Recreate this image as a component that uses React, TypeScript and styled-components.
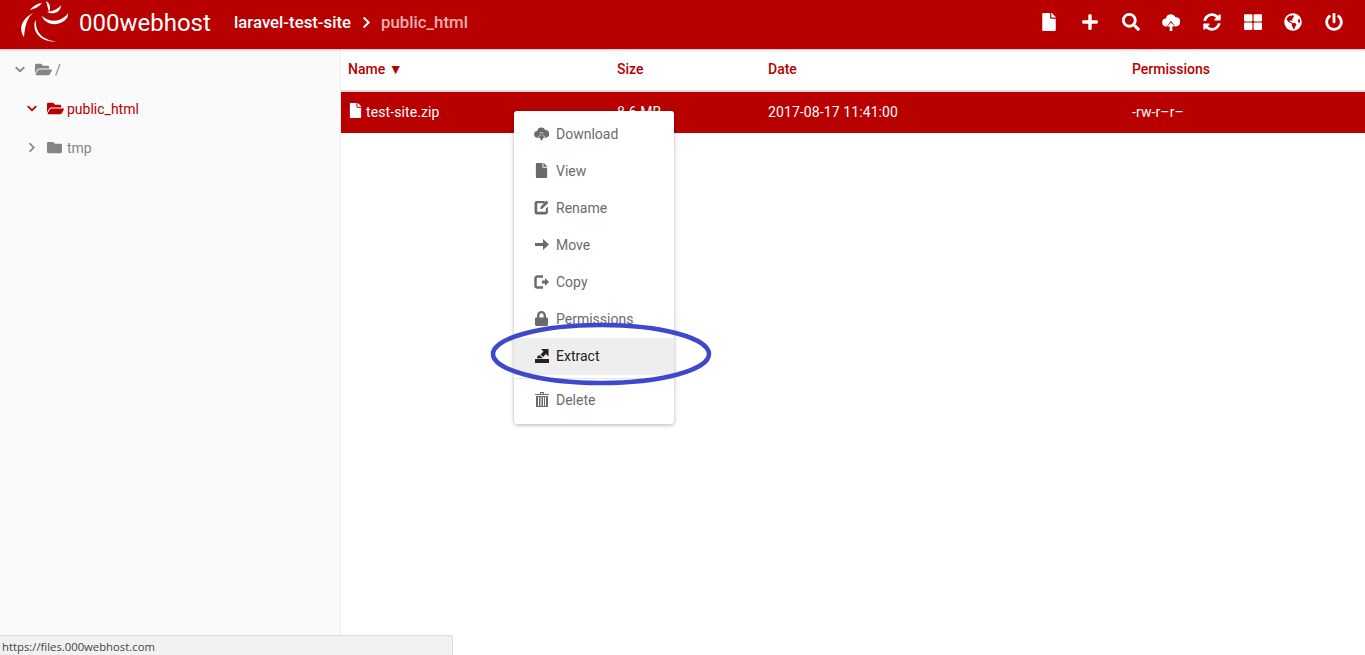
import React from 'react';
import styled, { createGlobalStyle } from 'styled-components';
import {
  FaChevronDown,
  FaChevronRight,
  FaFile,
  FaFolder,
  FaFolderOpen,
  FaGlobeAmericas,
  FaLock,
  FaPlus,
  FaPowerOff,
  FaSearch,
  FaSyncAlt,
  FaThLarge,
} from 'react-icons/fa';

const RED = '#b80000';

const GlobalStyle = createGlobalStyle`
  html, body, #root {
    height: 100%;
    margin: 0;
  }
  body {
    font-family: Roboto, "Liberation Sans", sans-serif;
    font-size: 14px;
    overflow: hidden;
    background: #fff;
  }
`;

const Page = styled.div`
  position: relative;
  display: flex;
  flex-direction: column;
  height: 655px;
`;

const TopBar = styled.header`
  display: flex;
  align-items: center;
  box-sizing: border-box;
  height: 49px;
  padding: 0 0 5px 19px;
  background: ${RED};
  color: #fff;
  box-shadow: 0 1px 2px rgba(0, 0, 0, 0.25);
  flex: none;
  position: relative;
  z-index: 1;
`;

const Brand = styled.div`
  display: flex;
  align-items: center;
  gap: 10px;
  width: 215px;
  font-size: 24px;
  flex: none;
`;

const BrandName = styled.span`
  margin-top: 2px;
`;

const Crumbs = styled.div`
  display: flex;
  align-items: center;
  font-size: 16.8px;
  font-weight: 500;
`;

const CrumbCurrent = styled.span`
  color: rgba(255, 255, 255, 0.7);
`;

const CrumbArrow = styled.span`
  display: flex;
  width: 13px;
  margin: 0 8.5px;
  font-size: 13px;
`;

const Tools = styled.nav`
  display: flex;
  align-items: center;
  margin-left: auto;
  padding-right: 22px;
  gap: 22.7px;
`;

const Tool = styled.span`
  display: flex;
  justify-content: center;
  width: 18px;
  font-size: 18px;
`;

const Body = styled.div`
  display: flex;
  flex: 1;
  min-height: 0;
`;

const Tree = styled.aside`
  width: 340px;
  flex: none;
  padding-top: 1px;
  background: #fafafa;
  border-right: 1px solid #efefef;
`;

const TreeRow = styled.div<{ $indent: number; $active?: boolean }>`
  display: flex;
  align-items: center;
  height: 39px;
  padding-left: ${({ $indent }) => $indent}px;
  color: ${({ $active }) => ($active ? RED : '#858585')};
`;

const TreeCaret = styled.span`
  display: flex;
  justify-content: center;
  width: 10px;
  margin-right: 10px;
  font-size: 11px;
`;

const TreeFolder = styled.span<{ $size?: number }>`
  display: flex;
  width: 17px;
  margin-right: 3px;
  font-size: ${({ $size }) => $size ?? 17}px;
`;

const Table = styled.div`
  flex: 1;
  min-width: 0;
`;

const GridRow = styled.div`
  display: grid;
  grid-template-columns: 269px 151px 364px 1fr;
  align-items: center;
  box-sizing: border-box;
  padding: 0 0 2px 7px;
`;

const HeadRow = styled(GridRow)`
  height: 43px;
  border-bottom: 2px solid #ddd;
  color: ${RED};
  font-weight: 500;
`;

const SortMark = styled.span`
  font-size: 14px;
`;

const FileRow = styled(GridRow)`
  height: 41px;
  background: ${RED};
  color: #fff;
  letter-spacing: 0.1px;
`;

const FileName = styled.span`
  display: flex;
  align-items: center;
  gap: 3px;
  svg {
    font-size: 15px;
    margin-top: -3px;
  }
`;

const Menu = styled.ul`
  position: absolute;
  left: 514px;
  top: 111px;
  width: 160px;
  margin: 0;
  padding: 5px 0;
  list-style: none;
  background: #fff;
  border-radius: 3px;
  box-shadow: 0 1px 4px rgba(0, 0, 0, 0.3);
  z-index: 2;
`;

const MenuItem = styled.li<{ $hover?: boolean }>`
  display: flex;
  align-items: center;
  box-sizing: border-box;
  height: 37px;
  padding: 0 0 2px 20px;
  color: ${({ $hover }) => ($hover ? '#222' : '#6b6b6b')};
  background: ${({ $hover }) => ($hover ? '#eee' : 'transparent')};
`;

const MenuIcon = styled.span`
  display: flex;
  justify-content: center;
  width: 15px;
  margin-right: 7px;
  font-size: 15px;
`;

const MenuDivider = styled.li`
  height: 1px;
  margin: 3px 0;
  background: #e5e5e5;
`;

const Scribble = styled.svg`
  position: absolute;
  left: 488px;
  top: 320px;
  z-index: 3;
`;

const StatusBubble = styled.div`
  position: absolute;
  left: 0;
  bottom: 0;
  width: 450px;
  height: 19px;
  padding-left: 2px;
  background: #f1f1f1;
  border-top: 1px solid #dcdcdc;
  border-right: 1px solid #dcdcdc;
  border-top-right-radius: 3px;
  color: #444;
  font-family: "Open Sans", sans-serif;
  font-size: 11.3px;
  line-height: 21px;
  z-index: 3;
`;

function Logo() {
  return (
    <svg width="50" height="44" viewBox="19 0 50 44" fill="#fff" aria-hidden="true">
      <path d="M42 16C47 21 56 22 61 19C65 17 67 15 68 13C69 20 60 25 52 24C47 23 43 20 42 16z" />
      <path d="M36 20C35 28 39 36 47 39C50 41 54 41 57 41C47 43 38 38 35 30C34 26 34 22 36 20z" />
      <path d="M33 13C28 17 25 24 24 37C21 33 20 27 23 22C25 18 29 15 33 13z" />
      <path d="M42 3C38 3 33 6 30 10C34 9 39 7 42 3z" />
      <path d="M46 1C50 3 51 8 49 12C48 8 47 5 46 1z" />
      <path d="M61 5C58 9 53 11 47 12C52 15 61 13 61 5z" />
    </svg>
  );
}

function CloudUpIcon() {
  return (
    <svg width="20" height="20" viewBox="0 0 20 20" fill="currentColor" aria-hidden="true">
      <path d="M5 15a4.500 4.500 0 0 1-.6-9A5.600 5.600 0 0 1 15 4.600a5.200 5.200 0 0 1 .5 10.400h-1L10 8.500 5.500 15z" />
      <path d="M10 10.500l4 4.500h-2.500v5h-3v-5H6z" />
    </svg>
  );
}

function CloudDownIcon() {
  return (
    <svg width="16" height="16" viewBox="0 0 20 20" fill="currentColor" aria-hidden="true">
      <path d="M5 15a4.500 4.500 0 0 1-.6-9A5.600 5.600 0 0 1 15 4.600a5.200 5.200 0 0 1 .5 10.400z" />
      <path d="M8.500 8h3v5H14l-4 6-4-6h2.500z" stroke="#fff" strokeWidth="1.200" paintOrder="stroke" />
    </svg>
  );
}

function ExtractIcon() {
  return (
    <svg width="14" height="14" viewBox="0 0 14 14" fill="currentColor" aria-hidden="true">
      <path d="M0 10h14v4H0z" />
      <path d="M2 9.300C2 7.500 3 6.500 4.500 6L7 8.500 8 9.300z" />
      <path d="M6 0h7.500v7.500L11 5 8 8 5.500 5.500 8.500 2.500z" />
    </svg>
  );
}

function RenameIcon() {
  return (
    <svg width="15" height="15" viewBox="0 0 14 14" fill="currentColor" aria-hidden="true">
      <path d="M2.500 1H10v2H3v8h8V8l2-2v5.500a2 2 0 0 1-2 2H2.500a2 2 0 0 1-2-2V3a2 2 0 0 1 2-2z" />
      <path d="M6 6.500 11.500.5l2 2L7.500 8.500H6z" />
    </svg>
  );
}

function MoveIcon() {
  return (
    <svg width="14" height="11" viewBox="0 0 14 11" fill="currentColor" aria-hidden="true">
      <path d="M0 4h8V0l6 5.500-6 5.500V7H0z" />
    </svg>
  );
}

function CopyIcon() {
  return (
    <svg width="15" height="14" viewBox="0 0 15 14" aria-hidden="true">
      <path d="M9 1.500H3.500a2 2 0 0 0-2 2v7a2 2 0 0 0 2 2H9" fill="none" stroke="currentColor" strokeWidth="2.500" />
      <path d="M8 5.500h3V3l4 4-4 4V8.500H8z" fill="currentColor" />
    </svg>
  );
}

function TrashIcon() {
  return (
    <svg width="14" height="15" viewBox="0 0 14 15" fill="currentColor" aria-hidden="true">
      <path d="M0 2h14v1H0zM5 0h4v2H8V1H6v1H5z" />
      <path d="M1 4h12v11H1zm2 1v9h1V5zm2.500 0v9h1V5zm2.500 0v9h1V5zm2 0v9h1V5z" fillRule="evenodd" />
    </svg>
  );
}

const menuItems = [
  { label: 'Download', icon: <CloudDownIcon /> },
  { label: 'View', icon: <FaFile /> },
  { label: 'Rename', icon: <RenameIcon /> },
  { label: 'Move', icon: <MoveIcon /> },
  { label: 'Copy', icon: <CopyIcon /> },
  { label: 'Permissions', icon: <FaLock /> },
];

export default function App() {
  return (
    <Page>
      <GlobalStyle />
      <TopBar>
        <Brand>
          <Logo />
          <BrandName>000webhost</BrandName>
        </Brand>
        <Crumbs>
          <span>laravel-test-site</span>
          <CrumbArrow>
            <FaChevronRight />
          </CrumbArrow>
          <CrumbCurrent>public_html</CrumbCurrent>
        </Crumbs>
        <Tools>
          <Tool><FaFile /></Tool>
          <Tool><FaPlus /></Tool>
          <Tool><FaSearch /></Tool>
          <Tool><CloudUpIcon /></Tool>
          <Tool><FaSyncAlt /></Tool>
          <Tool><FaThLarge /></Tool>
          <Tool><FaGlobeAmericas /></Tool>
          <Tool><FaPowerOff /></Tool>
        </Tools>
      </TopBar>
      <Body>
        <Tree>
          <TreeRow $indent={15}>
            <TreeCaret><FaChevronDown /></TreeCaret>
            <TreeFolder><FaFolderOpen /></TreeFolder>
            /
          </TreeRow>
          <TreeRow $indent={27} $active>
            <TreeCaret><FaChevronDown /></TreeCaret>
            <TreeFolder><FaFolderOpen /></TreeFolder>
            public_html
          </TreeRow>
          <TreeRow $indent={27}>
            <TreeCaret><FaChevronRight /></TreeCaret>
            <TreeFolder $size={15}><FaFolder /></TreeFolder>
            tmp
          </TreeRow>
        </Tree>
        <Table>
          <HeadRow>
            <span>
              Name <SortMark>▼</SortMark>
            </span>
            <span>Size</span>
            <span>Date</span>
            <span>Permissions</span>
          </HeadRow>
          <FileRow>
            <FileName>
              <FaFile />
              test-site.zip
            </FileName>
            <span>8.6 MB</span>
            <span>2017-08-17 11:41:00</span>
            <span>-rw-r–r–</span>
          </FileRow>
        </Table>
      </Body>
      <Menu>
        {menuItems.map((item) => (
          <MenuItem key={item.label}>
            <MenuIcon>{item.icon}</MenuIcon>
            {item.label}
          </MenuItem>
        ))}
        <MenuItem $hover>
          <MenuIcon><ExtractIcon /></MenuIcon>
          Extract
        </MenuItem>
        <MenuDivider />
        <MenuItem>
          <MenuIcon><TrashIcon /></MenuIcon>
          Delete
        </MenuItem>
      </Menu>
      <Scribble width="228" height="70" viewBox="0 0 228 70" fill="none">
        <ellipse cx="113" cy="34" rx="108" ry="29" stroke="#3f48cc" strokeWidth="4.500" />
      </Scribble>
      <StatusBubble>https://files.000webhost.com</StatusBubble>
    </Page>
  );
}
